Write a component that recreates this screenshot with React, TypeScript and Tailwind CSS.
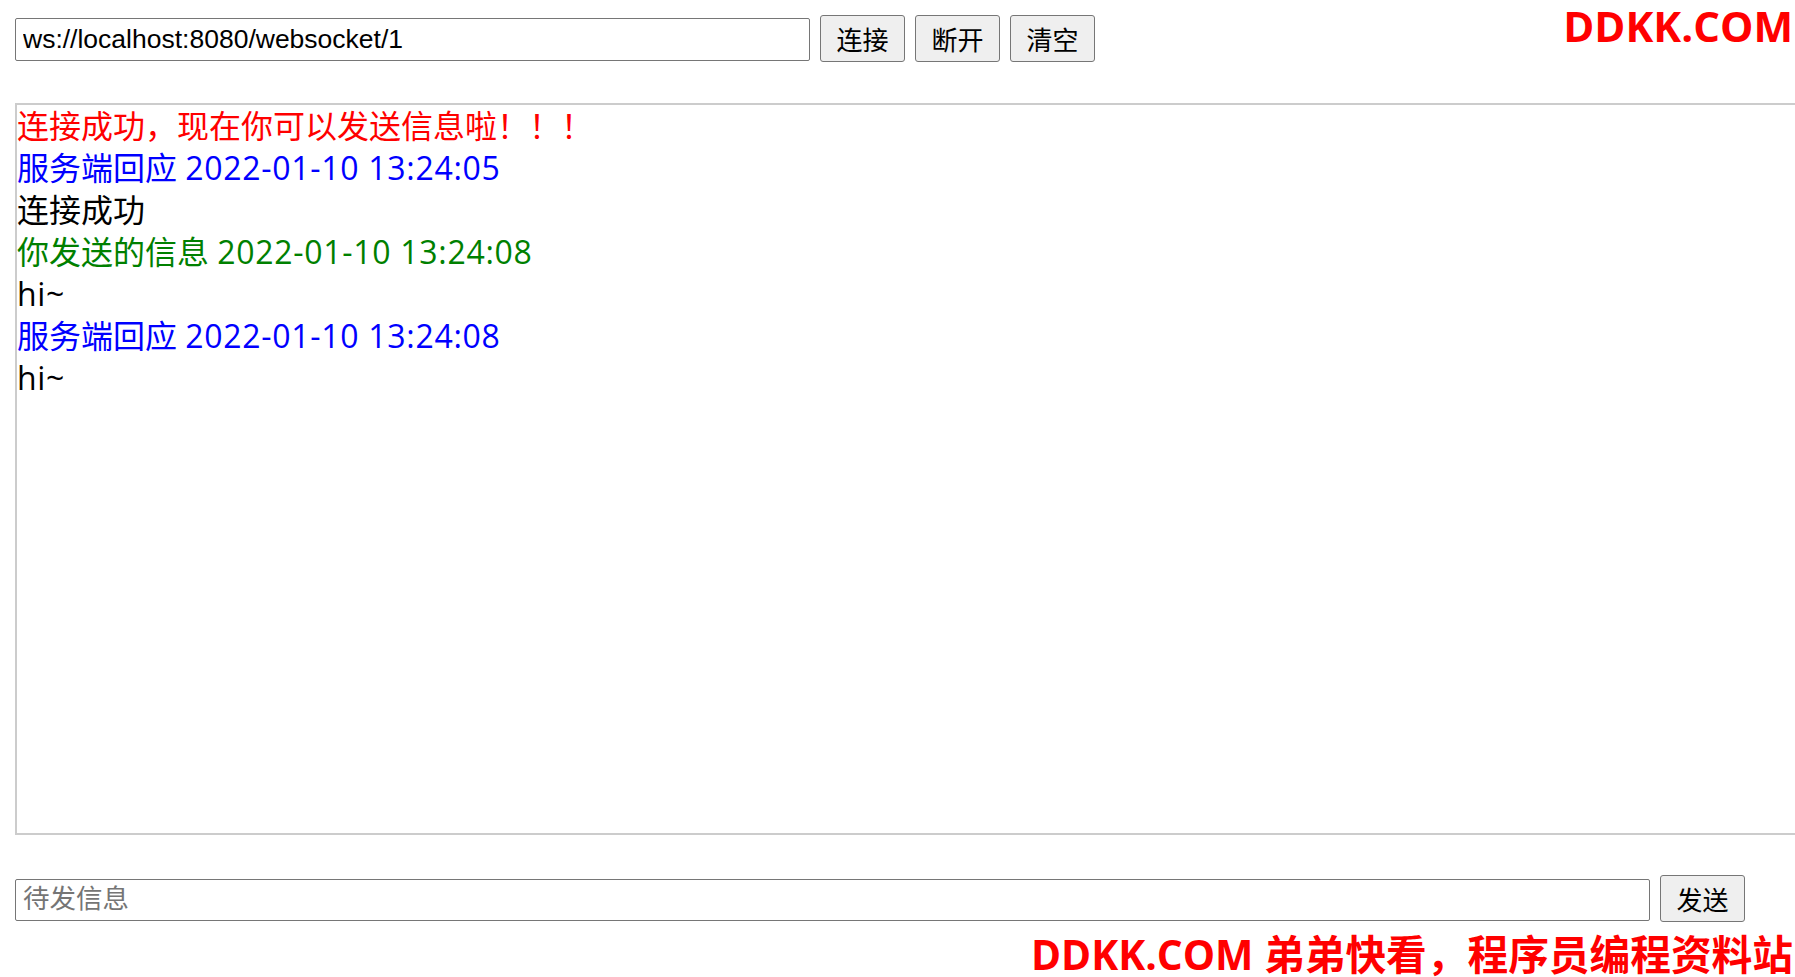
// each message: a label (CJK) and an optional latin part that needs a touch more width
const MESSAGES: { label: string; latin?: string; color: string }[] = [
  { label: '连接成功，现在你可以发送信息啦！！！', color: 'text-[#ff0000]' },
  { label: '服务端回应 ', latin: '2022-01-10 13:24:05', color: 'text-[#0000ff]' },
  { label: '连接成功', color: 'text-black' },
  { label: '你发送的信息 ', latin: '2022-01-10 13:24:08', color: 'text-[#008000]' },
  { label: '', latin: 'hi~', color: 'text-black' },
  { label: '服务端回应 ', latin: '2022-01-10 13:24:08', color: 'text-[#0000ff]' },
  { label: '', latin: 'hi~', color: 'text-black' },
];

const inputFont = "font-['Liberation_Sans','Noto_Sans_CJK_SC',sans-serif]";
const btn =
  "h-[47px] w-[85px] shrink-0 rounded-[3px] border border-[#767676] bg-[#efefef] text-[26px] text-black font-['Noto_Sans_CJK_SC',sans-serif] leading-none";

export default function App() {
  return (
    <div className="relative h-[977px] w-[1795px] overflow-hidden bg-white pl-[15px] pt-[15px]">
      <div className="flex items-center gap-[10px]">
        <input
          defaultValue="ws://localhost:8080/websocket/1"
          className={`mt-[2px] h-[43px] w-[795px] rounded-[2px] border border-[#767676] px-[7px] text-[26.5px] text-black outline-none ${inputFont}`}
        />
        <button className={btn}>连接</button>
        <button className={btn}>断开</button>
        <button className={btn}>清空</button>
      </div>

      <div className="mt-[41px] h-[732px] w-[1800px] border-2 border-[#cccccc] font-['Open_Sans','Noto_Sans_CJK_SC',sans-serif] text-[32px] leading-[42px]">
        {MESSAGES.map((m, i) => (
          <div key={i} className={m.color}>
            {m.label}
            {m.latin && <span className="tracking-[0.7px]">{m.latin}</span>}
          </div>
        ))}
      </div>

      <div className="mt-[40px] flex items-center gap-[10px]">
        <input
          placeholder="待发信息"
          className={`mt-[2px] h-[42px] w-[1635px] rounded-[2px] border border-[#767676] px-[7px] text-[26.5px] text-black outline-none placeholder:text-[#757575] ${inputFont}`}
        />
        <button className={btn}>发送</button>
      </div>

      <div className="absolute right-[2px] top-[5px] font-['Open_Sans','Noto_Sans_CJK_SC',sans-serif] text-[42px] font-bold leading-none text-[#ff0000]">
        DDKK.COM
      </div>
      <div className="absolute bottom-[2px] right-[2px] font-['Open_Sans','Noto_Sans_CJK_SC',sans-serif] text-[40.7px] font-bold leading-none text-[#ff0000] whitespace-nowrap">
        DDKK.COM 弟弟快看，程序员编程资料站
      </div>
    </div>
  );
}
